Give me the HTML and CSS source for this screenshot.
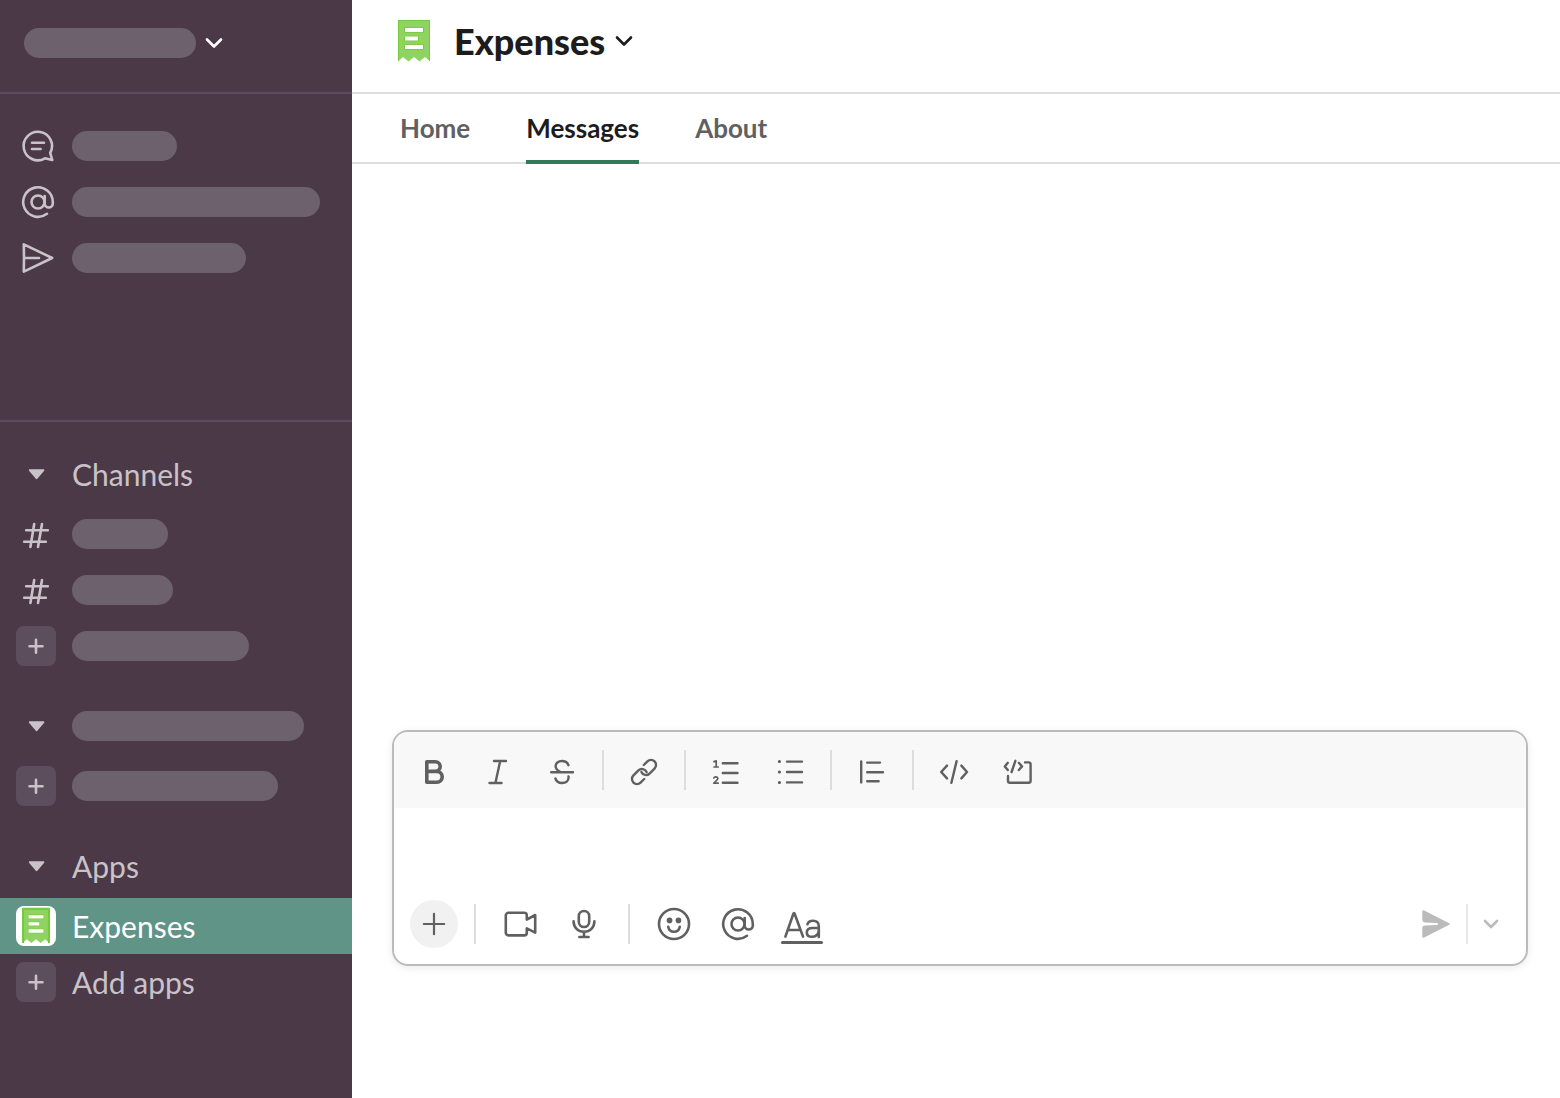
FILE: index.html
```html
<!DOCTYPE html>
<html lang="en">
<head>
    <meta charset="UTF-8">
    <meta name="viewport" content="width=device-width, initial-scale=1.0">
    <title>Expenses</title>
    <link rel="stylesheet" href="styles.css">
</head>
<body>
    <!-- Shared shapes -->
    <svg class="sprite" aria-hidden="true">
        <symbol id="receipt" viewBox="0 0 48 48">
            <path d="M8 3H40V44.5L35 40L29.5 44.5L24 40L18.5 44.5L13 40L8 44.5Z" fill="#8fd462"/>
            <path d="M8.5 43.5V3.5H39.5V43.5" fill="none" stroke="#76c83f"/>
            <path d="M15 11H33V15H15ZM15 19.5H28V23.5H15ZM15 28H33V32H15Z" fill="#fff" stroke="#76c83f" stroke-width="1.6" paint-order="stroke"/>
        </symbol>
        <symbol id="plus" viewBox="0 0 40 40">
            <path d="M20 13.8V26.8M13.5 20.3H26.5"/>
        </symbol>
        <symbol id="hash" viewBox="0 0 40 40">
            <path d="M10.2 16.3H31.8M8.2 27.7H29.8M18.2 10L14.4 33M26 10L22 33"/>
        </symbol>
        <symbol id="caret" viewBox="0 0 40 40">
            <path d="M13.8 16.2H27.4L20.6 24.2Z" fill="currentColor" stroke-width="2"/>
        </symbol>
        <symbol id="mention" viewBox="0 0 40 40">
            <circle cx="22" cy="20" r="6.5"/>
            <path d="M28.7 14V21.4A4 4 0 0 0 36.8 21.4V20A14.8 14.8 0 1 0 31 31.8"/>
        </symbol>
    </svg>

    <div class="app">
        <!-- Sidebar -->
        <aside class="sidebar">
            <button class="workspace" aria-label="Workspace menu">
                <span class="pill pill-172"></span>
                <svg class="chevron" viewBox="0 0 20 20"><path d="M3 6.5L10 13.5L17 6.5"/></svg>
            </button>

            <nav class="shortcuts">
                <a class="row" href="#" aria-label="Threads">
                    <svg class="icon" viewBox="0 0 40 40">
                        <path d="M34.2 27A14.2 14.2 0 1 0 29 32.3L36.3 34L34.2 27Z"/>
                        <path d="M16 16.8H28M16 23H24.6"/>
                    </svg>
                    <span class="pill pill-105"></span>
                </a>
                <a class="row" href="#" aria-label="Mentions">
                    <svg class="icon"><use href="#mention"/></svg>
                    <span class="pill pill-248"></span>
                </a>
                <a class="row" href="#" aria-label="Drafts and sent">
                    <svg class="icon" viewBox="0 0 40 40"><path d="M8 20L7.8 6.3L36.2 20L7.8 33.7L8 20H23"/></svg>
                    <span class="pill pill-174"></span>
                </a>
            </nav>

            <nav class="sections">
                <div class="section">
                    <button class="row heading"><svg class="icon"><use href="#caret"/></svg>Channels</button>
                    <a class="row" href="#" aria-label="Channel"><svg class="icon"><use href="#hash"/></svg><span class="pill pill-96"></span></a>
                    <a class="row" href="#" aria-label="Channel"><svg class="icon"><use href="#hash"/></svg><span class="pill pill-101"></span></a>
                    <button class="row" aria-label="Add channels"><svg class="icon icon-box"><use href="#plus"/></svg><span class="pill pill-177"></span></button>
                </div>
                <div class="section">
                    <button class="row heading" aria-label="Direct messages"><svg class="icon"><use href="#caret"/></svg><span class="pill pill-232"></span></button>
                    <button class="row" aria-label="Add teammates"><svg class="icon icon-box"><use href="#plus"/></svg><span class="pill pill-206"></span></button>
                </div>
                <div class="section">
                    <button class="row heading"><svg class="icon"><use href="#caret"/></svg>Apps</button>
                    <a class="row active" href="#"><svg class="icon app-icon"><use href="#receipt"/></svg>Expenses</a>
                    <button class="row"><svg class="icon icon-box"><use href="#plus"/></svg>Add apps</button>
                </div>
            </nav>
        </aside>

        <!-- Conversation -->
        <main class="main">
            <header class="header">
                <svg class="header-icon"><use href="#receipt"/></svg>
                <button class="title">
                    <span>Expenses</span>
                    <svg class="chevron" viewBox="0 0 20 20"><path d="M4 6.5L11 13.5L18 6.5"/></svg>
                </button>
            </header>

            <nav class="tabs">
                <a class="tab" href="#">Home</a>
                <a class="tab selected" href="#">Messages</a>
                <a class="tab" href="#">About</a>
            </nav>

            <div class="messages"></div>

            <form class="composer">
                <div class="toolbar">
                    <button type="button" class="tool" aria-label="Bold">
                        <svg class="icon" viewBox="0 0 40 40"><path d="M12.8 21.4H21.4A4.8 4.8 0 0 0 21.4 11.8H12.8V32.2H22.8A5.4 5.4 0 0 0 22.8 21.4H21.4" stroke-width="3.6"/></svg>
                    </button>
                    <button type="button" class="tool" aria-label="Italic">
                        <svg class="icon" viewBox="0 0 40 40"><path d="M16 11H28M11.5 33H23.5M22.2 11L17.4 33"/></svg>
                    </button>
                    <button type="button" class="tool" aria-label="Strikethrough">
                        <svg class="icon" viewBox="0 0 40 40"><path d="M9.2 22.2H31M26.5 15.2C25.5 12.6 23 11 20 11C16.2 11 13.6 13.2 13.6 16.2C13.6 19 15.6 20.6 18.6 22M13.4 28.4C14.2 31.4 16.8 33 20 33C24 33 26.6 30.8 26.6 27.6C26.6 27.2 26.6 26.8 26.5 26.4"/></svg>
                    </button>
                    <span class="divider"></span>
                    <button type="button" class="tool" aria-label="Link">
                        <svg class="icon" viewBox="0 0 40 40"><path d="M19.8 15L23.46 11.46A5 5 0 0 1 30.54 18.54L25.54 23.54A5 5 0 0 1 17.4 22M20.2 29L16.54 32.54A5 5 0 0 1 9.46 25.46L14.46 20.46A5 5 0 0 1 22.6 22"/></svg>
                    </button>
                    <span class="divider"></span>
                    <button type="button" class="tool" aria-label="Ordered list">
                        <svg class="icon" viewBox="0 0 40 40"><path d="M16.8 13.3H31.5M16.8 23H31.5M16.8 32.8H31.5"/><path d="M8 11.6L10.2 10.8V17M8 17H12.2M7.8 28C8.4 26.2 12 26.4 11.8 28.6C11.6 30 9.6 31.4 7.8 33.2H12.2" stroke-width="1.7"/></svg>
                    </button>
                    <button type="button" class="tool" aria-label="Bulleted list">
                        <svg class="icon" viewBox="0 0 40 40"><path d="M17 11.6H32M17 22H32M17 32.4H32"/><path d="M9.3 11.6H9.5M9.3 22H9.5M9.3 32.4H9.5" stroke-width="3"/></svg>
                    </button>
                    <span class="divider"></span>
                    <button type="button" class="tool" aria-label="Blockquote">
                        <svg class="icon" viewBox="0 0 40 40"><path d="M9.2 11.4V32.4M15.2 12.6H28M15.2 22.3H31M15.2 31.2H26.6"/></svg>
                    </button>
                    <span class="divider"></span>
                    <button type="button" class="tool" aria-label="Code">
                        <svg class="icon" viewBox="0 0 40 40"><path d="M13 15.6L7.2 22L13 28.4M27.4 15.6L33 22L27.4 28.4M22.6 11.2L17.4 32.8"/></svg>
                    </button>
                    <button type="button" class="tool" aria-label="Code block">
                        <svg class="icon" viewBox="0 0 40 40"><path d="M27 12.4H30.6A2 2 0 0 1 32.6 14.4V30.8A2 2 0 0 1 30.6 32.8H12A2 2 0 0 1 10 30.8V26"/><path d="M9.8 12.8L6.8 16.4L9.8 20M20.8 12.8L24 16.4L20.8 20M17.4 10.8L13.6 22"/></svg>
                    </button>
                </div>

                <textarea class="input" aria-label="Message"></textarea>

                <div class="actions">
                    <button type="button" class="attach" aria-label="Attach">
                        <svg class="icon" viewBox="0 0 40 40"><path d="M20 9.8V30.2M9.8 20H30.2" stroke-width="2.2"/></svg>
                    </button>
                    <span class="divider"></span>
                    <button type="button" class="tool" aria-label="Record video">
                        <svg class="icon" viewBox="0 0 40 40"><path d="M8.4 8.8H24.2A2.6 2.6 0 0 1 26.8 11.4V15.6L35.2 11V28.6L26.8 24.4V28.8A2.6 2.6 0 0 1 24.2 31.4H8.4A2.6 2.6 0 0 1 5.8 28.8V11.4A2.6 2.6 0 0 1 8.4 8.8Z"/></svg>
                    </button>
                    <button type="button" class="tool" aria-label="Record audio">
                        <svg class="icon" viewBox="0 0 40 40"><rect x="14.8" y="7" width="10.4" height="16" rx="5.2"/><path d="M9.6 17.2C9.6 23.6 14 27.8 20 27.8S30.4 23.6 30.4 17.2M20 28V33M15.4 33H24.6"/></svg>
                    </button>
                    <span class="divider"></span>
                    <button type="button" class="tool" aria-label="Emoji">
                        <svg class="icon" viewBox="0 0 40 40"><circle cx="20" cy="20" r="15"/><path d="M14.2 22.8C14.8 26 17 27.8 20 27.8S25.2 26 25.8 22.8"/><path d="M15.5 16.4H15.6M24.4 16.4H24.5" stroke-width="5.6"/></svg>
                    </button>
                    <button type="button" class="tool" aria-label="Mention someone">
                        <svg class="icon" viewBox="2 0 40 40"><use href="#mention" width="40" height="40"/></svg>
                    </button>
                    <button type="button" class="tool" aria-label="Hide formatting">
                        <svg class="icon" viewBox="0 0 40 40"><path d="M3.4 32.6L11.2 10.2Q12 8 12.8 10.2L21 32.6M6.4 26H18.6"/><path d="M25.4 20.2C26.2 18 28.4 16.8 31 16.8C34.6 16.8 36.8 18.8 36.8 22.2V33M36.8 24H30.6C27 24 24.8 25.6 24.8 28.4C24.8 31.2 26.8 32.8 29.8 32.8C33.8 32.8 36.8 30 36.8 26.4"/><path d="M.5 38.4H39.5" stroke-width="3"/></svg>
                    </button>
                    <div class="send-group">
                        <button type="submit" class="send" aria-label="Send">
                            <svg class="icon" viewBox="0 0 40 40"><path d="M6.3 7.6Q6.3 5.6 8.2 6.5L33.2 19.2Q34.6 20 33.2 20.8L8.2 33.5Q6.3 34.4 6.3 32.4V24.2Q6.3 21.8 9 21.6L21 21Q22 20.9 22 20Q22 19.1 21 19L9 18.4Q6.3 18.2 6.3 15.8Z" fill="currentColor" stroke="none"/></svg>
                        </button>
                        <span class="divider"></span>
                        <button type="button" class="send-options" aria-label="Schedule for later">
                            <svg class="chevron" viewBox="0 0 20 20"><path d="M4 7L10 13L16 7"/></svg>
                        </button>
                    </div>
                </div>
            </form>
        </main>
    </div>
</body>
</html>
```
FILE: styles.css
```css
* {
    margin: 0;
    padding: 0;
    box-sizing: border-box;
}

body {
    font-family: Lato, "Liberation Sans", sans-serif;
    color: #1d1c1d;
    background: #fff;
}

button {
    font: inherit;
    color: inherit;
    background: none;
    border: none;
    cursor: pointer;
}

a {
    color: inherit;
    text-decoration: none;
}

svg {
    fill: none;
    stroke: currentColor;
    stroke-linecap: round;
    stroke-linejoin: round;
    flex-shrink: 0;
}

.sprite {
    display: none;
}

.app {
    display: flex;
    min-height: 100vh;
}

.icon {
    width: 40px;
    height: 40px;
    overflow: visible;
    stroke-width: 2.6px;
}

.chevron {
    width: 20px;
    height: 20px;
    stroke-width: 2.6px;
}

/* Sidebar */
.sidebar {
    width: 352px;
    flex-shrink: 0;
    background: #4b3948;
    color: #c9c3c9;
    font-size: 30px;
}

.workspace {
    display: flex;
    align-items: center;
    gap: 8px;
    width: 100%;
    height: 94px;
    padding: 0 24px 6px;
    color: #fff;
    border-bottom: 2px solid #5d4c5b;
}

.pill {
    height: 30px;
    border-radius: 15px;
    background: #6d616e;
}

.pill-96 { width: 96px; }
.pill-101 { width: 101px; }
.pill-105 { width: 105px; }
.pill-172 { width: 172px; }
.pill-174 { width: 174px; }
.pill-177 { width: 177px; }
.pill-206 { width: 206px; }
.pill-232 { width: 232px; }
.pill-248 { width: 248px; }

.shortcuts {
    padding: 24px 0 134px;
    border-bottom: 2px solid #5d4c5b;
}

.row {
    display: flex;
    align-items: center;
    gap: 16px;
    width: 100%;
    height: 56px;
    padding: 0 16px;
    text-align: left;
}

.heading {
    margin-bottom: 4px;
}

.sections {
    display: flex;
    flex-direction: column;
    gap: 24px;
    padding: 24px 0;
}

.row.active {
    background: #5f9487;
    color: #fff;
}

.icon-box {
    border-radius: 8px;
    background: #5d4e5d;
}

.app-icon {
    border-radius: 8px;
    background: #fff;
    stroke: none;
}

/* Main */
.main {
    flex: 1;
    min-width: 0;
    display: flex;
    flex-direction: column;
}

.header {
    display: flex;
    align-items: center;
    gap: 16px;
    height: 94px;
    padding: 0 38px 10px;
    border-bottom: 2px solid #ddd;
}

.header-icon {
    width: 48px;
    height: 48px;
    stroke: none;
}

.title {
    display: flex;
    align-items: center;
    gap: 8px;
    font-size: 36px;
    font-weight: 900;
}

.tabs {
    display: flex;
    gap: 56px;
    height: 70px;
    padding: 0 48px;
    border-bottom: 2px solid #ddd;
    color: #616061;
    font-size: 26px;
    font-weight: 700;
}

.tab {
    height: 70px;
    line-height: 68px;
}

.tab.selected {
    color: #1d1c1d;
    border-bottom: 4px solid #2f7a5b;
}

.messages {
    flex: 1;
}

/* Composer */
.composer {
    margin: 0 32px 132px 40px;
    border: 2px solid #bbb;
    border-radius: 16px;
    box-shadow: 0 2px 8px rgba(0, 0, 0, 0.08);
    color: #616061;
    overflow: hidden;
}

.toolbar {
    display: flex;
    align-items: center;
    gap: 8px;
    height: 76px;
    padding: 0 12px;
    background: #f8f8f8;
}

.tool {
    display: flex;
    align-items: center;
    justify-content: center;
    width: 56px;
    height: 48px;
}

.toolbar .icon {
    stroke-width: 2.4px;
}

.divider {
    width: 2px;
    height: 40px;
    margin: 0 4px;
    background: #ddd;
}

.input {
    display: block;
    width: 100%;
    height: 76px;
    padding: 16px 24px;
    border: none;
    outline: none;
    resize: none;
    font: inherit;
    font-size: 30px;
}

.actions {
    display: flex;
    align-items: center;
    gap: 8px;
    padding: 16px 12px 16px 16px;
}

.actions .divider {
    margin: 0 8px;
}

.attach {
    display: flex;
    align-items: center;
    justify-content: center;
    width: 48px;
    height: 48px;
    border-radius: 50%;
    background: #f1f1f1;
}

.send-group {
    display: flex;
    align-items: center;
    margin-left: auto;
    color: #bbb;
}

.send-group .divider {
    margin: 0;
    background: #e8e8e8;
}

.send,
.send-options {
    display: flex;
    align-items: center;
    justify-content: center;
    width: 60px;
    height: 48px;
}

.send-options {
    width: 46px;
}
```
